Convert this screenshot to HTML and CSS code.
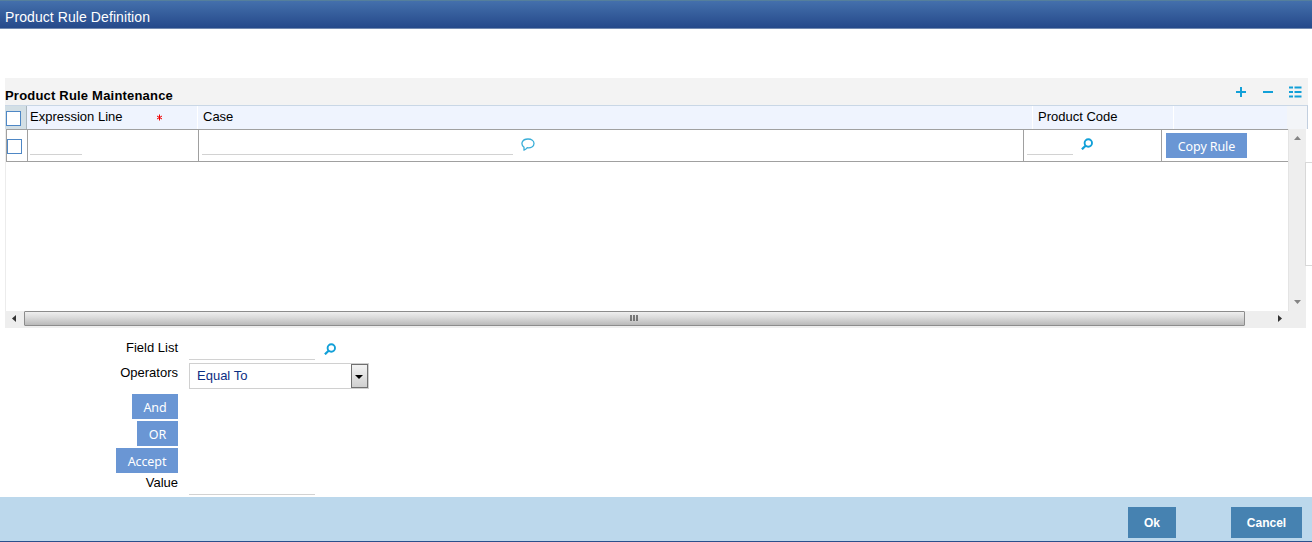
FILE: index.html
```html
<!DOCTYPE html>
<html lang="en">
<head>
<meta charset="UTF-8">
<title>Product Rule Definition</title>
<link rel="stylesheet" href="styles.css">
</head>
<body>
<div class="window">
    <div class="title-bar"><span>Product Rule Definition</span></div>

    <div class="panel">
        <div class="panel-head">
            <div class="panel-title">Product Rule Maintenance</div>
            <div class="tools">
                <svg width="12" height="12" viewBox="0 0 12 12"><path d="M6 1v10M1 6h10" stroke="#12a0d8" stroke-width="2"/></svg>
                <svg width="12" height="12" viewBox="0 0 12 12"><path d="M1 6h10" stroke="#12a0d8" stroke-width="2"/></svg>
                <svg width="13" height="12" viewBox="0 0 13 12"><path d="M0 1.500h4M5.500 1.500h7M0 6h4M5.500 6h7M0 10.500h4M5.500 10.500h7" stroke="#12a0d8" stroke-width="2"/></svg>
            </div>
        </div>
        <div class="grid-head">
            <div class="head-check"><span class="checkbox"></span></div>
            <div class="head-cell col-line"><span>Expression Line</span><svg class="required" width="7" height="7" viewBox="0 0 7 7"><path d="M3.500 .5v6M1 2l5 3M6 2l-5 3" stroke="#f00000"/></svg></div>
            <div class="head-cell col-case">Case</div>
            <div class="head-cell col-code">Product Code</div>
            <div class="head-cell col-copy"></div>
            <div class="head-corner"></div>
        </div>
        <div class="grid-body">
            <div class="grid-view">
                <div class="grid-row">
                    <div class="cell cell-check"><span class="checkbox"></span></div>
                    <div class="cell cell-line"><span class="field field-line"></span></div>
                    <div class="cell cell-case">
                        <span class="field field-case"></span>
                        <svg class="bubble" width="14" height="13" viewBox="0 0 14 13"><path d="M3 12V9.200C-.7 6.500.8 1 7 1c3.500 0 6 1.800 6 4.400 0 3.200-3.200 4.800-6.700 4.300C5.300 11 4.500 11.800 3 12z" fill="none" stroke="#3aaed8" stroke-width="1.300"/></svg>
                    </div>
                    <div class="cell cell-code">
                        <span class="field field-code"></span>
                        <svg class="search" width="12" height="12" viewBox="0 0 12 12"><circle cx="7.300" cy="5" r="3.700" fill="none" stroke="#12a0d8" stroke-width="1.900"/><path d="M4.600 7.700L.9 11.300" stroke="#12a0d8" stroke-width="2.200"/></svg>
                    </div>
                    <div class="cell cell-copy"><button class="btn">Copy Rule</button></div>
                </div>
            </div>
            <div class="vscroll">
                <svg width="7" height="4" viewBox="0 0 7 4"><path d="M0 4l3.500-4L7 4z" fill="#858585"/></svg>
                <svg width="7" height="4" viewBox="0 0 7 4"><path d="M0 0l3.500 4L7 0z" fill="#858585"/></svg>
            </div>
        </div>
        <div class="hscroll">
            <div class="arrow"><svg width="4" height="7" viewBox="0 0 4 7"><path d="M4 0L0 3.500 4 7z" fill="#333"/></svg></div>
            <div class="thumb"><svg width="9" height="7" viewBox="0 0 9 7"><path d="M1 0v6M4 0v6M7 0v6" stroke="#555" stroke-width="1.500"/></svg></div>
            <div class="arrow arrow-right"><svg width="4" height="7" viewBox="0 0 4 7"><path d="M0 0l4 3.500L0 7z" fill="#333"/></svg></div>
        </div>
        <div class="side-tab"></div>
    </div>

    <div class="form">
        <div class="form-row row-field">
            <label>Field List</label>
            <span class="field field-form"></span>
            <svg class="search" width="12" height="12" viewBox="0 0 12 12"><circle cx="7.300" cy="5" r="3.700" fill="none" stroke="#12a0d8" stroke-width="1.900"/><path d="M4.600 7.700L.9 11.300" stroke="#12a0d8" stroke-width="2.200"/></svg>
        </div>
        <div class="form-row row-operators">
            <label>Operators</label>
            <div class="select">
                <span>Equal To</span>
                <div class="select-arrow"><svg width="8" height="4" viewBox="0 0 8 4"><path d="M0 0h8L4 4z" fill="#000"/></svg></div>
            </div>
        </div>
        <div class="form-buttons">
            <button class="btn btn-and">And</button>
            <button class="btn btn-or">OR</button>
            <button class="btn btn-accept">Accept</button>
        </div>
        <div class="form-row row-value">
            <label>Value</label>
            <span class="field field-form"></span>
        </div>
    </div>

    <div class="footer">
        <button class="action action-ok">Ok</button>
        <button class="action action-cancel">Cancel</button>
    </div>
</div>
</body>
</html>
```
FILE: styles.css
```css
* {
    box-sizing: border-box;
}
body {
    margin: 0;
    background: #fff;
    color: #000;
    font-family: "Liberation Sans", Arial, sans-serif;
    font-size: 13px;
    line-height: 15px;
}
svg {
    display: block;
    flex: none;
}
button {
    border: 0;
    padding: 0;
}
.window {
    display: flex;
    flex-direction: column;
    width: 1312px;
    height: 542px;
    overflow: hidden;
}
.title-bar {
    height: 29px;
    padding: 8px 5px 0;
    border-top: 1px solid #557f9c;
    border-bottom: 1px solid #728ab0;
    background: linear-gradient(#4470ac, #25498a);
    color: #fff;
    font-size: 14px;
    line-height: 16px;
    letter-spacing: 0.08px;
}

/* Rule grid */
.panel {
    position: relative;
    margin: 49px 4px 0 5px;
    height: 250px;
}
.panel-head {
    display: flex;
    justify-content: space-between;
    height: 27px;
    background: #f3f3f3;
}
.panel-title {
    padding-top: 10px;
    font-weight: bold;
    letter-spacing: 0.2px;
}
.tools {
    display: flex;
    gap: 15px;
    padding: 8px 6px 0 0;
}
.grid-head {
    display: flex;
    height: 24px;
    width: 1303px;
    border-top: 1px solid #c9d7e6;
    border-right: 1px solid #c2cfdf;
    background: #eff4fe;
}
.head-check {
    width: 22px;
    padding: 5px 0 0 1px;
    background: #d3dfe5;
    border-right: 1px solid #a9b5bc;
}
.checkbox {
    display: block;
    width: 15px;
    height: 15px;
    background: #fff;
    border: 1px solid #4e87c5;
}
.head-cell {
    display: flex;
    padding-top: 3px;
    border-right: 1px solid #fff;
}
.col-line {
    width: 171px;
    padding-left: 3px;
}
.required {
    margin: 5px 0 0 33px;
}
.col-case {
    width: 835px;
    padding-left: 5px;
}
.col-code {
    width: 141px;
    padding-left: 5px;
}
.col-copy {
    flex: 1;
    border-right: 0;
}
.head-corner {
    width: 20px;
    background: #f3f5f8;
}
.grid-body {
    display: flex;
    width: 1301px;
    height: 182px;
}
.grid-view {
    width: 1283px;
    border-left: 1px solid #ececec;
}
.grid-row {
    display: flex;
    height: 33px;
    border-top: 1px solid #a0a0a0;
    border-bottom: 1px solid #a0a0a0;
}
.cell {
    display: flex;
    border-left: 1px solid #a0a0a0;
}
.cell-check {
    width: 21px;
    padding-top: 9px;
}
.cell-line {
    width: 171px;
    padding-left: 2px;
}
.cell-case {
    width: 825px;
    padding-left: 3px;
}
.cell-code {
    width: 138px;
    padding-left: 3px;
}
.cell-copy {
    flex: 1;
    padding: 3px 0 0 4px;
}
.field {
    display: block;
    height: 25px;
    border-bottom: 1px solid #d2d2d2;
}
.field-line {
    width: 52px;
}
.field-case {
    width: 311px;
}
.field-code {
    width: 46px;
}
.bubble {
    margin: 8px 0 0 8px;
}
.cell-code .search {
    margin: 8px 0 0 8px;
}
.btn {
    width: 81px;
    height: 25px;
    padding-top: 2px;
    background: #6a96d4;
    color: #fff;
    font-family: "Noto Sans", sans-serif;
    font-size: 12.5px;
    letter-spacing: -0.1px;
    line-height: 20px;
}
.vscroll {
    display: flex;
    flex-direction: column;
    justify-content: space-between;
    align-items: center;
    width: 18px;
    padding: 7px 1px 7px 0;
    background: #eee;
    border-left: 1px solid #e4e4e4;
}
.hscroll {
    display: flex;
    width: 1301px;
    height: 17px;
    background: #eee;
}
.arrow {
    width: 19px;
    padding: 4px 0 0 7px;
}
.thumb {
    display: flex;
    justify-content: center;
    width: 1221px;
    height: 15px;
    padding: 3px 1px 0 0;
    border: 1px solid #8c8c8c;
    border-radius: 1px;
    background: linear-gradient(#efefef, #dcdcdc 40%, #b9b9b9);
}
.arrow-right {
    width: 44px;
    padding-left: 33px;
}
.side-tab {
    position: absolute;
    top: 84px;
    right: -5px;
    width: 8px;
    height: 104px;
    background: #fff;
    border: 1px solid #d8d8d8;
    border-right: 0;
}

/* Expression form */
.form {
    height: 169px;
    padding-top: 12px;
}
.form-row {
    display: flex;
}
.form-row label {
    width: 178px;
    margin-right: 11px;
    text-align: right;
}
.field-form {
    width: 126px;
    height: 20px;
}
.row-field {
    height: 23px;
}
.row-field .search {
    margin: 3px 0 0 9px;
}
.row-operators {
    height: 26px;
}
.row-operators label {
    padding-top: 2px;
}
.select {
    display: flex;
    justify-content: space-between;
    width: 180px;
    height: 26px;
    padding-left: 7px;
    border: 1px solid #d0d0d0;
    color: #0b2e83;
}
.select span {
    padding-top: 4px;
}
.select-arrow {
    width: 17px;
    height: 24px;
    padding: 10px 0 0 3px;
    border: 1px solid #707070;
    background: linear-gradient(#f3f3f3, #cfcfcf);
}
.form-buttons {
    display: flex;
    flex-direction: column;
    align-items: flex-end;
    gap: 2px;
    width: 178px;
    padding-top: 5px;
}
.btn-and {
    width: 46px;
}
.btn-or {
    width: 41px;
}
.btn-accept {
    width: 62px;
}
.row-value {
    padding-top: 2px;
}

/* Bottom bar */
.footer {
    display: flex;
    justify-content: flex-end;
    height: 45px;
    padding: 10px 10px 0 0;
    background: #bcd8ec;
    border-bottom: 1px solid #2b508c;
}
.action {
    height: 31px;
    background: #4682b1;
    color: #fff;
    font-family: "Liberation Sans", Arial, sans-serif;
    font-size: 12px;
    font-weight: bold;
}
.action-ok {
    width: 48px;
    margin-right: 55px;
}
.action-cancel {
    width: 71px;
}
```
